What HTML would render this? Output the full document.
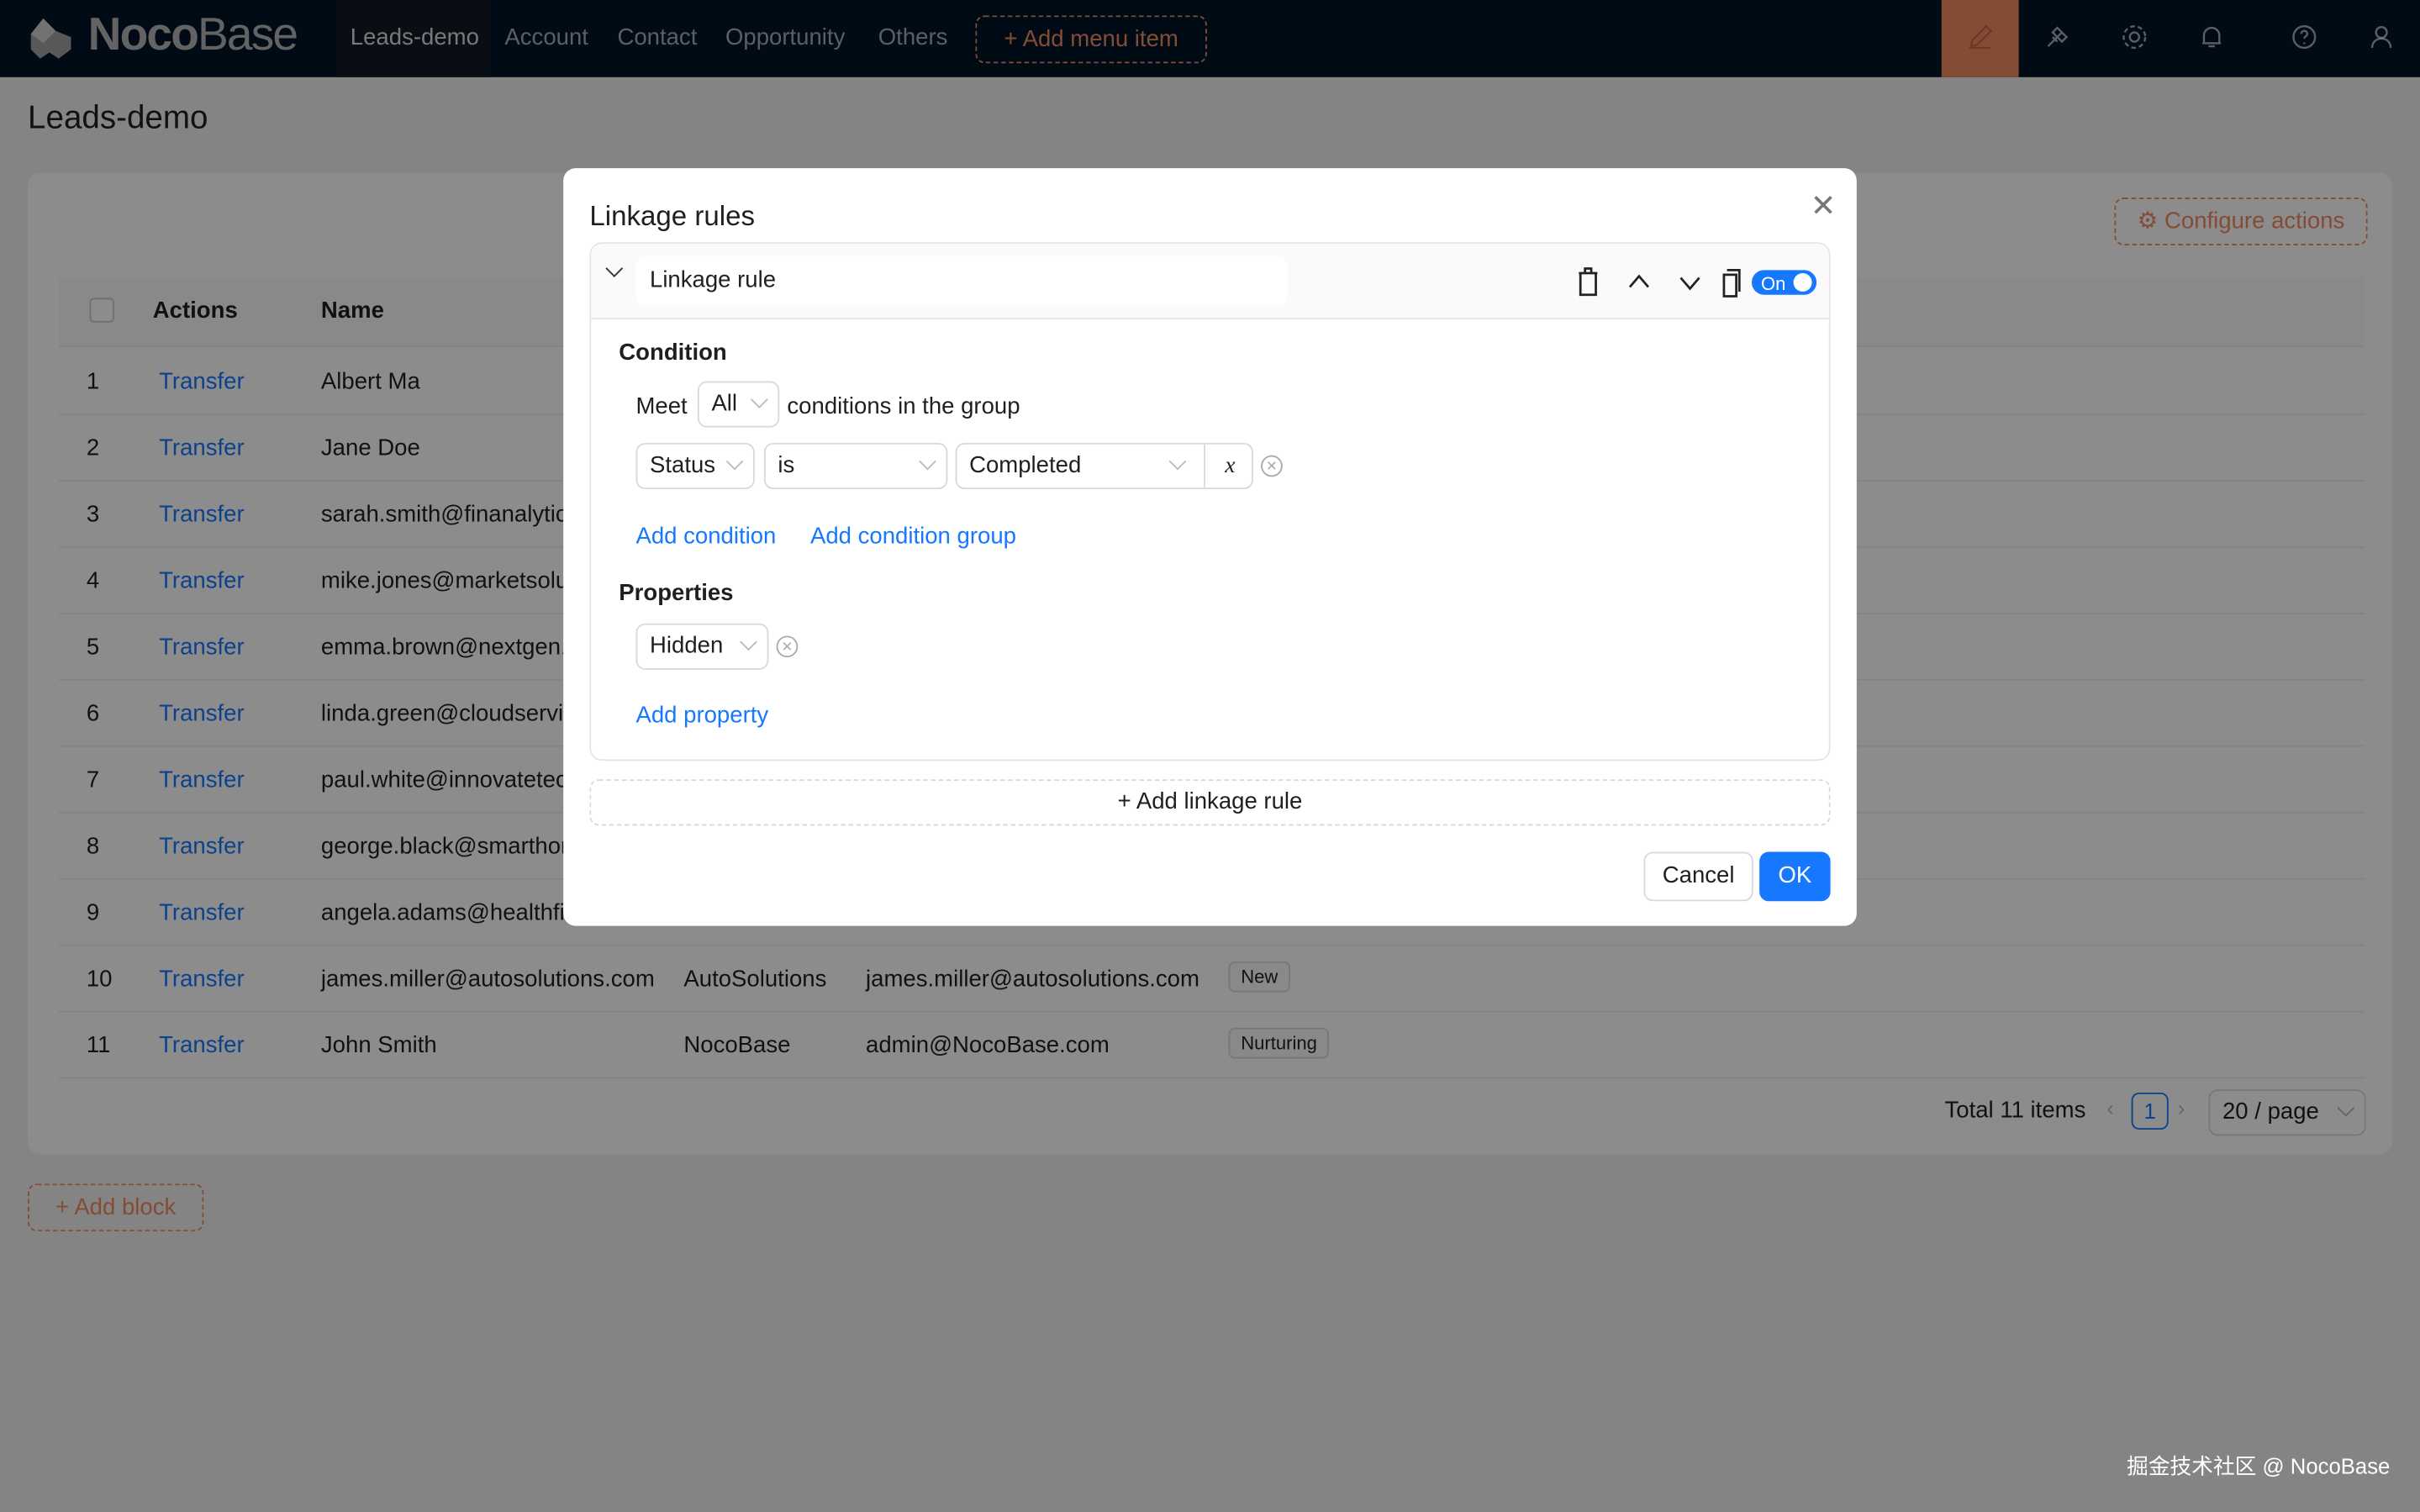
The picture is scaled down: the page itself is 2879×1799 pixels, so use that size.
<!DOCTYPE html>
<html><head><meta charset="utf-8"><style>
html,body{margin:0;padding:0;width:2879px;height:1799px;overflow:hidden;background:#f0f0f0;}
#w{position:absolute;left:0;top:0;width:1568px;height:980px;transform:scale(1.83610);transform-origin:0 0;font-family:"Liberation Sans","Noto Sans CJK SC",sans-serif;font-size:14px;color:#1f1f1f;background:#f0f0f0;}
.abs{position:absolute;}
.hdr{left:0;top:0;width:1568px;height:50px;background:#001529;}
.nav{top:0;height:50px;line-height:50px;color:#ffffffa6;font-size:15px;}
.card{left:18px;top:112px;width:1532px;height:636px;background:#fff;border-radius:8px;}
.row{left:38px;width:1494px;height:43px;border-bottom:1px solid #eee;font-size:15px;}
.row span{position:absolute;top:14px;}
.link{color:#1677ff;}
.tag{border:1px solid #d9d9d9;background:#fafafa;border-radius:4px;font-size:12px;padding:2px 7px;}
.ov{left:0;top:0;width:1568px;height:980px;background:rgba(0,0,0,0.45);}
.modal{left:365px;top:109px;width:838px;height:491px;background:#fff;border-radius:8px;}
.sel{position:absolute;height:30px;border:1px solid #d9d9d9;border-radius:6px;background:#fff;box-sizing:border-box;line-height:28px;padding-left:8px;font-size:15px;}
.chev{position:absolute;right:8px;width:7px;height:7px;border-right:1px solid #bbb;border-bottom:1px solid #bbb;transform:rotate(45deg);top:7px;}
.hi{position:absolute;top:15px;}
</style></head><body><div id="w">
<div class="abs hdr"></div>
<div class="abs" style="left:16px;top:10px;width:34px;height:30px;">
<svg width="34" height="30" viewBox="0 0 34 30"><path d="M12 2 L4 12 L4 22 L10 28 L16 24 L22 28 L30 22 L30 14 L20 10 Z" fill="#a0a0a0"/><path d="M12 2 L20 10 L12 18 L4 12Z" fill="#d0d0d0"/></svg></div>
<div class="abs" style="left:57px;top:6px;font-size:30px;color:#b4b4b4;letter-spacing:-1px;"><b>Noco</b><span style="font-weight:300">Base</span></div>
<div class="abs" style="left:218px;top:0;width:100px;height:50px;background:#0f1a26;"></div>
<div class="abs nav" style="left:227px;color:#dcdcdc">Leads-demo</div>
<div class="abs nav" style="left:327px">Account</div>
<div class="abs nav" style="left:400px">Contact</div>
<div class="abs nav" style="left:470px">Opportunity</div>
<div class="abs nav" style="left:569px">Others</div>
<div class="abs" style="left:632px;top:10px;width:148px;height:29px;border:1px dashed #f18b62;border-radius:6px;color:#f18b62;font-size:15px;line-height:29px;text-align:center;">+ Add menu item</div>
<div class="abs" style="left:1258px;top:0;width:50px;height:50px;background:#f18b62;"></div>
<svg class="hi" style="left:1274px" width="18" height="18" viewBox="0 0 18 18" fill="none" stroke="#c46a45" stroke-width="1.3"><path d="M3 15l4-1 9-9-3-3-9 9zM2 16h14"/></svg>
<svg class="hi" style="left:1324px" width="18" height="18" viewBox="0 0 18 18" fill="none" stroke="#ffffffa6" stroke-width="1.3"><path d="M6 12l6-6M9 3l6 6-3 3-6-6zM3 15l3-3M6 9l3 3"/></svg>
<svg class="hi" style="left:1374px" width="18" height="18" viewBox="0 0 18 18" fill="none" stroke="#ffffffa6" stroke-width="1.3"><circle cx="9" cy="9" r="3"/><circle cx="9" cy="9" r="7" stroke-dasharray="3 2"/></svg>
<svg class="hi" style="left:1424px" width="18" height="18" viewBox="0 0 18 18" fill="none" stroke="#ffffffa6" stroke-width="1.3"><path d="M4 13V8a5 5 0 0110 0v5zM3 13h12M7 15h4"/></svg>
<svg class="hi" style="left:1484px" width="18" height="18" viewBox="0 0 18 18" fill="none" stroke="#ffffffa6" stroke-width="1.3"><circle cx="9" cy="9" r="7"/><path d="M7 7a2 2 0 114 0c0 1.5-2 1.5-2 3M9 12.5v1"/></svg>
<svg class="hi" style="left:1534px" width="18" height="18" viewBox="0 0 18 18" fill="none" stroke="#ffffffa6" stroke-width="1.3"><circle cx="9" cy="6" r="3.5"/><path d="M3 16c0-4 3-6 6-6s6 2 6 6"/></svg>
<div class="abs" style="left:18px;top:65px;font-size:21px;color:#1f1f1f;">Leads-demo</div>
<div class="abs card"></div>
<div class="abs" style="left:1370px;top:128px;width:162px;height:29px;border:1px dashed #f18b62;border-radius:6px;color:#f18b62;font-size:15px;line-height:29px;text-align:center;">⚙ Configure actions</div>
<div class="abs" style="left:38px;top:180px;width:1494px;height:44px;background:#fafafa;border-bottom:1px solid #eee;font-size:15px;font-weight:bold;">
<span class="abs" style="left:20px;top:13px;width:14px;height:14px;border:1px solid #ccc;border-radius:3px;background:#fff"></span>
<span class="abs" style="left:61px;top:13px">Actions</span><span class="abs" style="left:170px;top:13px">Name</span></div>
<div id="rows"></div>
<div class="abs" style="left:1260px;top:711px;font-size:15px;">Total 11 items</div>
<div class="abs" style="left:1365px;top:710px;color:#bbb">‹</div>
<div class="abs" style="left:1381px;top:708px;width:22px;height:22px;border:1px solid #1677ff;border-radius:5px;color:#1677ff;text-align:center;line-height:22px;">1</div>
<div class="abs" style="left:1411px;top:710px;color:#bbb">›</div>
<div class="abs sel" style="left:1431px;top:706px;width:102px;">20 / page<span class="chev"></span></div>
<div class="abs" style="left:18px;top:767px;width:112px;height:29px;border:1px dashed #f18b62;border-radius:6px;color:#f18b62;font-size:15px;line-height:29px;text-align:center;">+ Add block</div>
<div class="abs ov"></div>
<div class="abs" style="left:1378px;top:940px;color:#fff;font-size:14px;">掘金技术社区 @ NocoBase</div>
<div class="abs modal">
<div class="abs" style="left:17px;top:21px;font-size:18px;">Linkage rules</div>
<div class="abs" style="left:808px;top:12px;font-size:20px;color:#777;">✕</div>
<div class="abs" style="left:17px;top:48px;width:802px;height:334px;border:1px solid #e5e5e5;border-radius:8px;overflow:hidden;">
<div class="abs" style="left:0;top:0;width:802px;height:48px;background:#fafafa;border-bottom:1px solid #e5e5e5;"></div>
<div class="abs" style="left:11px;top:12px;width:7px;height:7px;border-right:1.5px solid #333;border-bottom:1.5px solid #333;transform:rotate(45deg)"></div>
<div class="abs" style="left:29px;top:8px;width:422px;height:32px;background:#fff;border-radius:6px;"><span class="abs" style="left:9px;top:7px;font-size:15px">Linkage rule</span></div>
<svg class="abs" style="left:636px;top:14px" width="160" height="22" viewBox="0 0 160 22"><g fill="none" stroke="#222" stroke-width="1.5"><path d="M4 5h12M8 5V2h4v3M5 5v14h10V5"/><path d="M37 14l6-7 6 7"/><path d="M70 8l6 7 6-7"/><path d="M98 6h8v14h-8zM100 3h8v14"/></g><rect x="116" y="3" width="42" height="16" rx="8" fill="#1677ff"/><circle cx="149" cy="11" r="6" fill="#fff"/><text x="122" y="16" fill="#fff" font-size="12" font-family="Liberation Sans">On</text></svg>
<div class="abs" style="left:18px;top:62px;font-size:15px;font-weight:bold;">Condition</div>
<div class="abs" style="left:29px;top:97px;font-size:15px;">Meet</div>
<div class="sel" style="left:69px;top:89px;width:53px;">All<span class="chev"></span></div>
<div class="abs" style="left:127px;top:97px;font-size:15px;">conditions in the group</div>
<div class="sel" style="left:29px;top:129px;width:77px;">Status<span class="chev"></span></div>
<div class="sel" style="left:112px;top:129px;width:119px;">is<span class="chev"></span></div>
<div class="sel" style="left:236px;top:129px;width:193px;">Completed<span class="chev" style="right:44px"></span><span class="abs" style="left:160px;top:0;width:32px;height:28px;border-left:1px solid #d9d9d9;text-align:center;font-style:italic;font-family:'Liberation Serif',serif;">x</span></div>
<div class="abs" style="left:434px;top:137px;width:12px;height:12px;border:1px solid #aaa;border-radius:50%;font-size:9px;line-height:12px;text-align:center;color:#aaa">✕</div>
<div class="abs link" style="left:29px;top:181px;font-size:15px;">Add condition</div>
<div class="abs link" style="left:142px;top:181px;font-size:15px;">Add condition group</div>
<div class="abs" style="left:18px;top:218px;font-size:15px;font-weight:bold;">Properties</div>
<div class="sel" style="left:29px;top:246px;width:86px;">Hidden<span class="chev"></span></div>
<div class="abs" style="left:120px;top:254px;width:12px;height:12px;border:1px solid #aaa;border-radius:50%;font-size:9px;line-height:12px;text-align:center;color:#aaa">✕</div>
<div class="abs link" style="left:29px;top:297px;font-size:15px;">Add property</div>
</div>
<div class="abs" style="left:17px;top:396px;width:802px;height:28px;border:1px dashed #d9d9d9;border-radius:6px;text-align:center;line-height:28px;font-size:15px;">+ Add linkage rule</div>
<div class="abs" style="left:700px;top:443px;width:69px;height:30px;border:1px solid #d9d9d9;border-radius:6px;text-align:center;line-height:30px;font-size:15px;">Cancel</div>
<div class="abs" style="left:775px;top:443px;width:46px;height:32px;background:#1677ff;border-radius:6px;text-align:center;line-height:32px;font-size:15px;color:#fff;">OK</div>
</div>
</div>
<script>
var d=[["Albert Ma"],["Jane Doe"],["sarah.smith@finanalytics.com"],["mike.jones@marketsolutions.com"],["emma.brown@nextgen.com"],["linda.green@cloudservices.com"],["paul.white@innovatetech.com"],["george.black@smarthome.com"],["angela.adams@healthfirst.com"],["james.miller@autosolutions.com","AutoSolutions","james.miller@autosolutions.com","New"],["John Smith","NocoBase","admin@NocoBase.com","Nurturing"]];
var h="";d.forEach(function(r,i){var t=225+i*43;h+='<div class="abs row" style="top:'+t+'px"><span style="left:18px">'+(i+1)+'</span><span class="link" style="left:65px">Transfer</span><span style="left:170px">'+r[0]+'</span>'+(r[1]?'<span style="left:405px">'+r[1]+'</span><span style="left:523px">'+r[2]+'</span><span class="tag" style="left:758px;top:11px">'+r[3]+'</span>':'')+'</div>';});
document.getElementById("rows").innerHTML=h;
</script>
</body></html>
